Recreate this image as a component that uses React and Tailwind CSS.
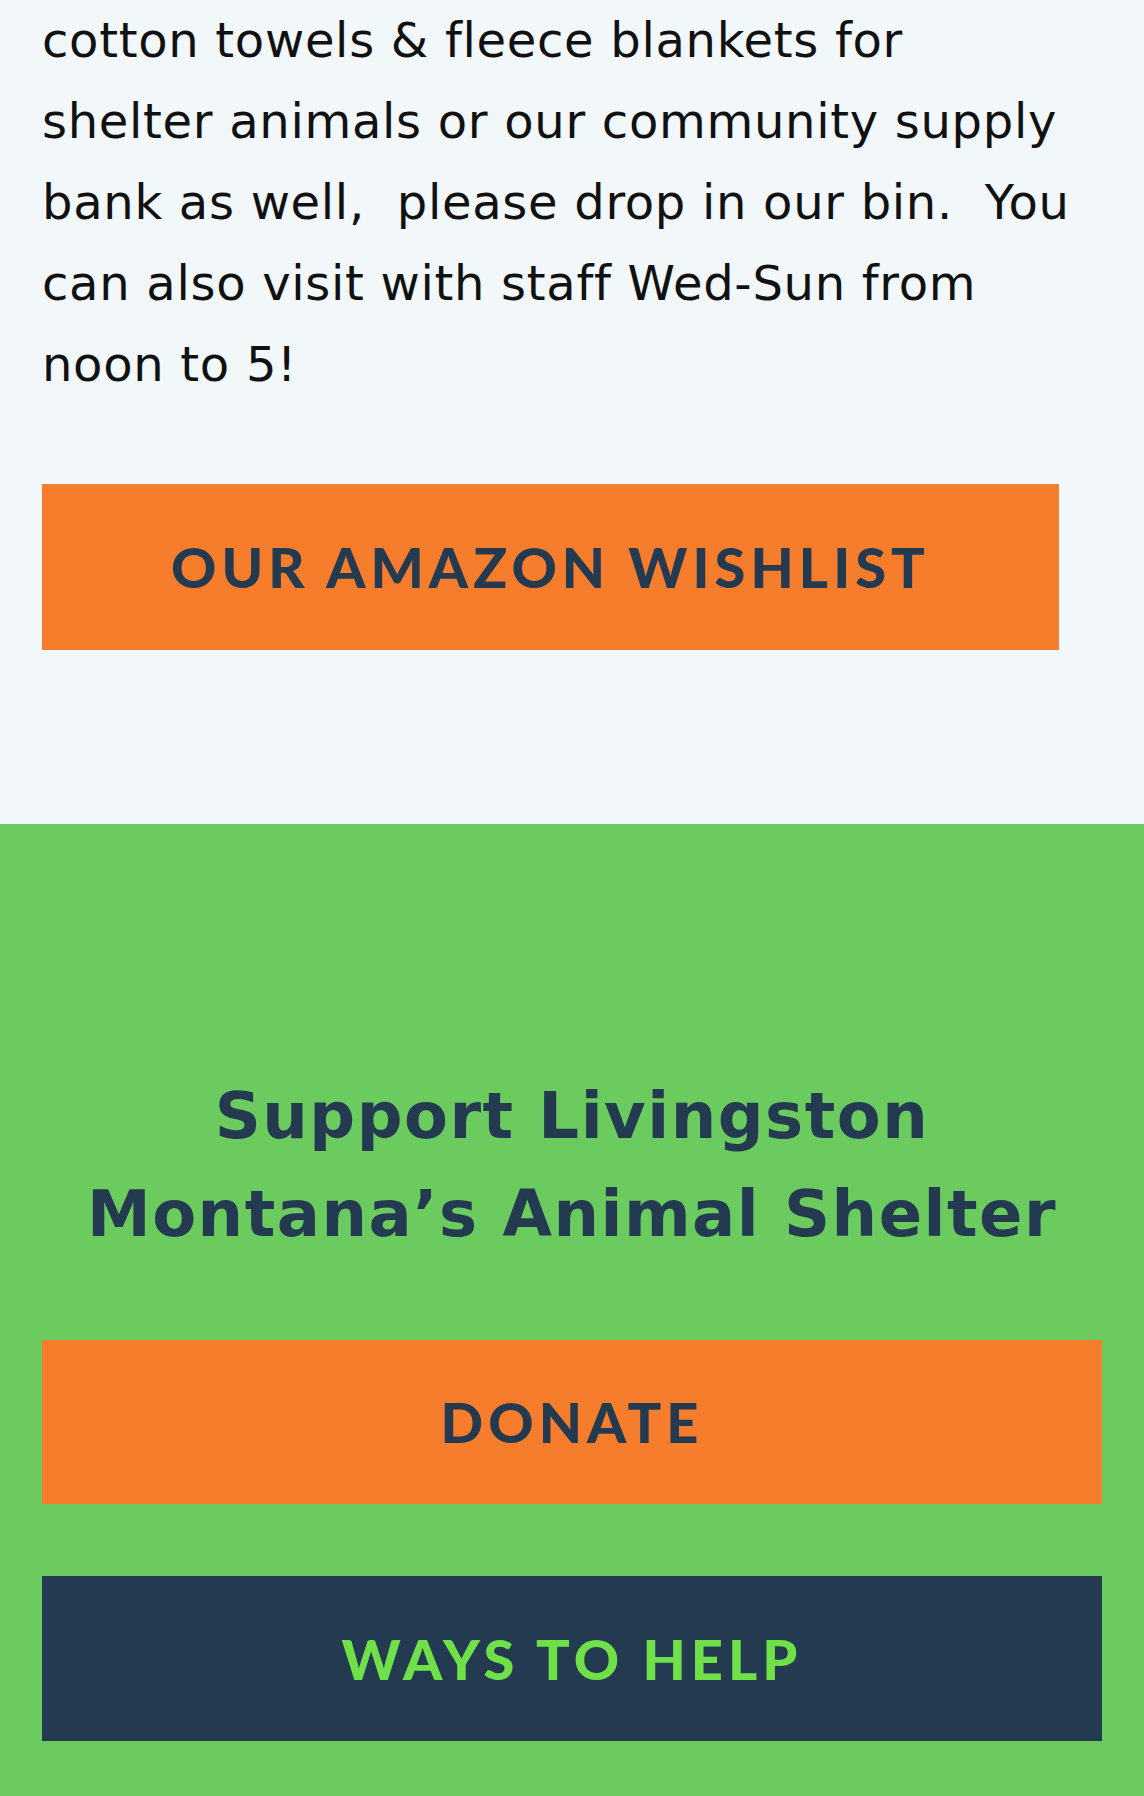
import React from "react";

const body = { fontFamily: "'DejaVu Sans', 'Open Sans', sans-serif" };
const heavy = { fontFamily: "Lato, 'Open Sans', sans-serif" };
const title = { fontFamily: "'DejaVu Sans', Lato, sans-serif" };

const lines = [
  "cotton towels & fleece blankets for",
  "shelter animals or our community supply",
  "bank as well,\u00a0 please drop in our bin.\u00a0 You",
  "can also visit with staff Wed-Sun from",
  "noon to 5!",
];

const Button = ({ children, className }) => (
  <a
    href="#"
    className={`flex items-center justify-center font-black uppercase tracking-[0.09em] text-[56px] ${className}`}
    style={heavy}
  >
    {children}
  </a>
);

export default function App() {
  return (
    <div className="w-[1144px] min-h-[1796px]">
      {/* Wishlist copy */}
      <section className="bg-[#f2f7fa] px-[42px] pb-[174px]">
        <p className="text-[48px] tracking-[0.7px] leading-[81px] text-[#111111]" style={body}>
          {lines.map((l, i) => (
            <span key={i} className="block whitespace-nowrap">
              {l}
            </span>
          ))}
        </p>
        <Button className="mt-[79px] w-[1017px] h-[166px] bg-[#f67d2c] text-[#243a51]">
          Our Amazon Wishlist
        </Button>
      </section>

      {/* Support CTA */}
      <section className="bg-[#6ccb5f] px-[42px] pt-[243px] pb-[55px]">
        <h2
          className="text-center font-bold text-[64px] tracking-[1.5px] leading-[98px] text-[#243a51]"
          style={title}
        >
          Support Livingston
          <br />
          Montana’s Animal Shelter
        </h2>
        <div className="mt-[77px] flex flex-col gap-[72px]">
          <Button className="h-[164px] bg-[#f67d2c] text-[#243a51]">Donate</Button>
          <Button className="h-[165px] bg-[#243a51] text-[#6fe047]">Ways to Help</Button>
        </div>
      </section>
    </div>
  );
}
